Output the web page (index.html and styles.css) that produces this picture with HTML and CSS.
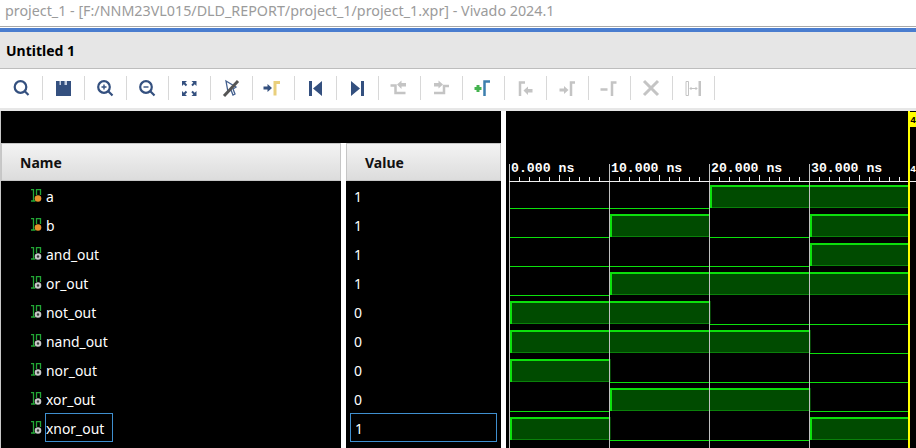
FILE: index.html
```html
<!DOCTYPE html>
<html>
<head>
<meta charset="utf-8">
<title>project_1 - Vivado 2024.1</title>
<link rel="stylesheet" href="styles.css">
</head>
<body>
<div class="titlebar">project_1 - [F:/NNM23VL015/DLD_REPORT/project_1/project_1.xpr] - Vivado 2024.1</div>
<div class="accent"></div>
<div class="tabbar">Untitled 1</div>

<div class="toolbar">
	<!-- search -->
	<div class="tool"><svg viewBox="0 0 20 20"><circle class="line" cx="9.5" cy="9" r="5.800"/><path class="line" d="M13.800 13.300l3.700 3.700"/></svg></div>
	<!-- save -->
	<div class="tool"><svg viewBox="0 0 20 20"><path class="solid" d="M3 3h15v15H3z"/><path class="notch" d="M6.500 3H8v4H6.500zM11.500 3H14v4h-2.500z"/></svg></div>
	<!-- zoom in -->
	<div class="tool"><svg viewBox="0 0 20 20"><circle class="line" cx="9" cy="9" r="5.800"/><path class="line" d="M13.300 13.300l4.200 4.200"/><path class="thin" d="M6.500 9h5M9 6.500v5"/></svg></div>
	<!-- zoom out -->
	<div class="tool"><svg viewBox="0 0 20 20"><circle class="line" cx="9" cy="9" r="5.800"/><path class="line" d="M13.300 13.300l4.200 4.200"/><path class="thin" d="M6.500 9h5"/></svg></div>
	<!-- fit -->
	<div class="tool"><svg viewBox="0 0 20 20"><path class="solid" d="M3 3h5l-1.800 1.800 2 2-1.400 1.400-2-2L3 8zM17.500 3v5l-1.800-1.800-2 2-1.400-1.400 2-2L12.500 3zM3 18v-5l1.800 1.800 2-2 1.400 1.400-2 2L8 18zM17.500 18h-5l1.800-1.800-2-2 1.400-1.400 2 2 1.800-1.800z"/></svg></div>
	<!-- cursor off -->
	<div class="tool"><svg viewBox="0 0 20 20"><path class="cursor" d="M5 3l10 6-3 2 2 5-2 1-2-5-3 2z"/><path class="slash" d="M17 3L3 18"/></svg></div>
	<!-- go to cursor -->
	<div class="tool"><svg viewBox="0 0 20 20"><path class="solid" d="M.5 8.500h4V6L9 10l-4.500 4v-2.500h-4z"/><path class="yellow" d="M12 17.500V4.500h5"/></svg></div>
	<!-- first -->
	<div class="tool"><svg viewBox="0 0 20 20"><path class="solid" d="M4 3h3v15H4zM17 3v15l-9-7.500z"/></svg></div>
	<!-- last -->
	<div class="tool"><svg viewBox="0 0 20 20"><path class="solid" d="M14 3h3v15h-3zM4 3v15l9-7.500z"/></svg></div>
	<!-- previous edge -->
	<div class="tool"><svg viewBox="0 0 20 20"><path class="off-line" d="M1.500 7.500h5V15h10"/><path class="off-solid" d="M8 6.500l4.500-4V5H17v3.500h-4.500V11z"/></svg></div>
	<!-- next edge -->
	<div class="tool"><svg viewBox="0 0 20 20"><path class="off-line" d="M3 15h10V8h5"/><path class="off-solid" d="M3 5h4.500V2.500L12 6.500l-4.500 4V8.500H3z"/></svg></div>
	<!-- add marker -->
	<div class="tool"><svg viewBox="0 0 20 20"><path class="green" d="M1.500 10.500h7M5 7v7"/><path class="blue" d="M11.500 18V3.500H17"/></svg></div>
	<!-- swap left -->
	<div class="tool"><svg viewBox="0 0 20 20"><path class="off-line" d="M5 18V4.500h5"/><path class="off-solid" d="M8.500 12.500l4.500-4V11h4.500v3.500H13V17z"/></svg></div>
	<!-- swap right -->
	<div class="tool"><svg viewBox="0 0 20 20"><path class="off-line" d="M14 18V4.500h4"/><path class="off-solid" d="M2.500 10.500H7V8l4.500 4L7 16v-2.500H2.500z"/></svg></div>
	<!-- remove marker -->
	<div class="tool"><svg viewBox="0 0 20 20"><path class="off-line" d="M1.500 11.500h7M13 18V4.500h4.500"/></svg></div>
	<!-- delete -->
	<div class="tool"><svg viewBox="0 0 20 20"><path class="off-cross" d="M3 3l14 14M17 3L3 17"/></svg></div>
	<!-- interval -->
	<div class="tool"><svg viewBox="0 0 20 20"><path class="off-thin" d="M3 3.500h2.500v14H3zM7 10.500h7M8.500 9l-1.500 1.500L8.500 12M12.500 9l1.500 1.500L12.500 12"/><path class="off-solid" d="M15.500 3H18v15h-2.500z"/></svg></div>
</div>
<div class="band"></div>

<div class="main">
	<div class="signals">
		<div class="topgap"></div>
		<div class="columns">
			<div class="col col-name">
				<div class="head">Name</div>
				<div class="row"><svg class="sig" viewBox="0 0 12 15"><path class="sig-line" d="M1 .5h2.500v11M1 12h4.500M6.500 6V.5h4V6"/><circle class="dot-in" cx="8" cy="9.500" r="3.300"/></svg><span class="cell">a</span></div>
				<div class="row"><svg class="sig" viewBox="0 0 12 15"><path class="sig-line" d="M1 .5h2.500v11M1 12h4.500M6.500 6V.5h4V6"/><circle class="dot-in" cx="8" cy="9.500" r="3.300"/></svg><span class="cell">b</span></div>
				<div class="row"><svg class="sig" viewBox="0 0 12 15"><path class="sig-line" d="M1 .5h2.500v11M1 12h4.500M6.500 6V.5h4V6"/><circle class="dot-out" cx="8" cy="9.500" r="2.300"/></svg><span class="cell">and_out</span></div>
				<div class="row"><svg class="sig" viewBox="0 0 12 15"><path class="sig-line" d="M1 .5h2.500v11M1 12h4.500M6.500 6V.5h4V6"/><circle class="dot-out" cx="8" cy="9.500" r="2.300"/></svg><span class="cell">or_out</span></div>
				<div class="row"><svg class="sig" viewBox="0 0 12 15"><path class="sig-line" d="M1 .5h2.500v11M1 12h4.500M6.500 6V.5h4V6"/><circle class="dot-out" cx="8" cy="9.500" r="2.300"/></svg><span class="cell">not_out</span></div>
				<div class="row"><svg class="sig" viewBox="0 0 12 15"><path class="sig-line" d="M1 .5h2.500v11M1 12h4.500M6.500 6V.5h4V6"/><circle class="dot-out" cx="8" cy="9.500" r="2.300"/></svg><span class="cell">nand_out</span></div>
				<div class="row"><svg class="sig" viewBox="0 0 12 15"><path class="sig-line" d="M1 .5h2.500v11M1 12h4.500M6.500 6V.5h4V6"/><circle class="dot-out" cx="8" cy="9.500" r="2.300"/></svg><span class="cell">nor_out</span></div>
				<div class="row"><svg class="sig" viewBox="0 0 12 15"><path class="sig-line" d="M1 .5h2.500v11M1 12h4.500M6.500 6V.5h4V6"/><circle class="dot-out" cx="8" cy="9.500" r="2.300"/></svg><span class="cell">xor_out</span></div>
				<div class="row"><svg class="sig" viewBox="0 0 12 15"><path class="sig-line" d="M1 .5h2.500v11M1 12h4.500M6.500 6V.5h4V6"/><circle class="dot-out" cx="8" cy="9.500" r="2.300"/></svg><span class="cell selected">xnor_out</span></div>
			</div>
			<div class="col col-value">
				<div class="head">Value</div>
				<div class="row"><span class="cell">1</span></div>
				<div class="row"><span class="cell">1</span></div>
				<div class="row"><span class="cell">1</span></div>
				<div class="row"><span class="cell">1</span></div>
				<div class="row"><span class="cell">0</span></div>
				<div class="row"><span class="cell">0</span></div>
				<div class="row"><span class="cell">0</span></div>
				<div class="row"><span class="cell">0</span></div>
				<div class="row"><span class="cell selected">1</span></div>
			</div>
		</div>
	</div>

	<svg class="wave" viewBox="506 111 410 337">
		<!-- one group per signal, same coordinates, shifted down 29px each -->
		<g>
			<path class="low" d="M510 208.500H710"/>
			<path class="fill" d="M710 185H909V208H710Z"/><path class="under" d="M710 207.500H909"/><path class="edge" d="M711 208V186H909"/>
		</g>
		<g transform="translate(0 29)">
			<path class="low" d="M510 208.500H610M710 208.500H810"/>
			<path class="fill" d="M610 185H710V208H610ZM810 185H909V208H810Z"/><path class="under" d="M610 207.500H710M810 207.500H909"/><path class="edge" d="M611 208V186H710M811 208V186H909"/>
		</g>
		<g transform="translate(0 58)">
			<path class="low" d="M510 208.500H810"/>
			<path class="fill" d="M810 185H909V208H810Z"/><path class="under" d="M810 207.500H909"/><path class="edge" d="M811 208V186H909"/>
		</g>
		<g transform="translate(0 87)">
			<path class="low" d="M510 208.500H610"/>
			<path class="fill" d="M610 185H909V208H610Z"/><path class="under" d="M610 207.500H909"/><path class="edge" d="M611 208V186H909"/>
		</g>
		<g transform="translate(0 116)">
			<path class="low" d="M710 208.500H909"/>
			<path class="fill" d="M510 185H710V208H510Z"/><path class="under" d="M510 207.500H710V185"/><path class="edge" d="M511 208V186H710"/>
		</g>
		<g transform="translate(0 145)">
			<path class="low" d="M810 208.500H909"/>
			<path class="fill" d="M510 185H810V208H510Z"/><path class="under" d="M510 207.500H810V185"/><path class="edge" d="M511 208V186H810"/>
		</g>
		<g transform="translate(0 174)">
			<path class="low" d="M610 208.500H909"/>
			<path class="fill" d="M510 185H610V208H510Z"/><path class="under" d="M510 207.500H610V185"/><path class="edge" d="M511 208V186H610"/>
		</g>
		<g transform="translate(0 203)">
			<path class="low" d="M510 208.500H610M810 208.500H909"/>
			<path class="fill" d="M610 185H810V208H610Z"/><path class="under" d="M610 207.500H810V185"/><path class="edge" d="M611 208V186H810"/>
		</g>
		<g transform="translate(0 232)">
			<path class="low" d="M610 208.500H810"/>
			<path class="fill" d="M510 185H610V208H510ZM810 185H909V208H810Z"/><path class="under" d="M510 207.500H610V185M810 207.500H909"/><path class="edge" d="M511 208V186H610M811 208V186H909"/>
		</g>

		<path class="grid" d="M509.500 164V448M609.500 164V448M709.500 164V448M809.500 164V448"/>
		<path class="ruler" d="M509 181.500H916"/>
		<path class="ruler" d="M519.500 177V181M529.500 177V181M539.500 177V181M549.500 177V181M559.500 175V181M569.500 177V181M579.500 177V181M589.500 177V181M599.500 177V181
			M619.500 177V181M629.500 177V181M639.500 177V181M649.500 177V181M659.500 175V181M669.500 177V181M679.500 177V181M689.500 177V181M699.500 177V181
			M719.500 177V181M729.500 177V181M739.500 177V181M749.500 177V181M759.500 175V181M769.500 177V181M779.500 177V181M789.500 177V181M799.500 177V181
			M819.500 177V181M829.500 177V181M839.500 177V181M849.500 177V181M859.500 175V181M869.500 177V181M879.500 177V181M889.500 177V181M899.500 177V181"/>
		<text class="time" x="511" y="172">0.000 ns</text>
		<text class="time" x="611" y="172">10.000 ns</text>
		<text class="time" x="711" y="172">20.000 ns</text>
		<text class="time" x="811" y="172">30.000 ns</text>
		<text class="time-cut" x="910.2" y="172">4</text>

		<path class="now" d="M909 111V448"/>
		<rect class="now-box" x="909" y="112" width="7" height="15"/>
		<text class="time-cut now-text" x="910.2" y="123">4</text>
	</svg>
</div>
</body>
</html>
```

FILE: styles.css
```css
html, body {
	margin: 0;
	height: 448px;
	overflow: hidden;
	background: white;
	font-family: "Noto Sans", sans-serif;
}

.titlebar {
	height: 26px;
	padding-left: 5px;
	border-bottom: 1px solid #a9a9a9;
	font-size: 14.3px;
	line-height: 21px;
	color: #9b9b9b;
	white-space: nowrap;
}
.accent {
	height: 4px;
	margin-top: 1px;
	background: #4a7dcf;
}
.tabbar {
	height: 36px;
	padding-left: 6px;
	border-bottom: 1px solid #bdbdbd;
	background: #e6e6e6;
	font-size: 14px;
	font-weight: bold;
	line-height: 37px;
	color: black;
}

.toolbar {
	display: flex;
	align-items: flex-start;
	height: 32px;
	padding-top: 7px;
}
.tool {
	display: flex;
	align-items: center;
	width: 31px;
	height: 24px;
	padding-left: 10px;
	border-right: 1px solid #d8d8d8;
}
.tool:first-child {
	width: 31px;
	padding-left: 11px;
}
.tool svg {
	width: 20px;
	height: 20px;
}
.band {
	height: 3px;
	background: #e7e7e7;
}

/* toolbar icon strokes */
.line, .thin, .slash, .yellow, .off-line, .off-thin, .off-cross, .green, .blue, .cursor {
	fill: none;
}
.line { stroke: #34507f; stroke-width: 2.2; }
.thin { stroke: #34507f; stroke-width: 1.4; }
.solid { fill: #34507f; }
.notch { fill: #c6d0e2; }
.cursor { stroke: #44608f; stroke-width: 1.3; }
.slash { stroke: #555555; stroke-width: 3; }
.yellow { stroke: #e9cf7c; stroke-width: 3; }
.off-line { stroke: #c4c4c4; stroke-width: 2.500; }
.off-solid { fill: #c4c4c4; }
.off-thin { stroke: #c4c4c4; stroke-width: 1; }
.off-cross { stroke: #c4c4c4; stroke-width: 3; }
.green { stroke: #45b34f; stroke-width: 3; }
.blue { stroke: #3d7fae; stroke-width: 2.500; }

.main {
	display: flex;
	height: 337px;
}
.signals {
	display: flex;
	flex-direction: column;
	width: 500px;
	border-left: 1px solid #c8c8c8;
}
.topgap {
	height: 32px;
	background: black;
}
.columns {
	flex: 1;
	display: flex;
	gap: 5px;
}
.col {
	background: black;
}
.col-name {
	width: 340px;
}
.col-value {
	width: 155px;
}
.head {
	box-sizing: border-box;
	height: 38px;
	padding-left: 18px;
	margin-bottom: 2px;
	border: 1px solid #c6c6c6;
	background: linear-gradient(#f3f3f3, #dcdcdc);
	font-size: 14px;
	font-weight: bold;
	line-height: 37px;
	color: #111111;
}
.row {
	display: flex;
	align-items: center;
	height: 29px;
	font-size: 14px;
	color: white;
}
.col-name .row {
	padding-left: 29px;
	font-size: 13.9px;
}
.col-value .row {
	padding-left: 4px;
}
.sig {
	flex: none;
	width: 12px;
	height: 15px;
	margin-right: 4px;
	margin-top: -2px;
}
.sig-line {
	fill: none;
	stroke: #22a635;
	stroke-width: 1.3;
}
.dot-in {
	fill: #e8922c;
}
.dot-out {
	fill: #3a3a3a;
	stroke: #c8c8c8;
	stroke-width: 2;
}
.cell {
	box-sizing: border-box;
	height: 29px;
	line-height: 27px;
}
.col-value .cell {
	padding-left: 4px;
}
.selected {
	width: 68px;
	height: 29px;
	margin-top: -4px;
	margin-left: -1px;
	line-height: 29px;
	border: 1px solid #3f8fcf;
}
.col-value .selected {
	width: 147px;
	margin-left: 0;
}

.wave {
	display: block;
	width: 410px;
	height: 337px;
	margin-left: 5px;
	background: black;
}
.low {
	fill: none;
	stroke: #0ce00c;
	stroke-width: 1;
}
.fill {
	fill: #004b00;
}
.under {
	fill: none;
	stroke: #0a800a;
	stroke-width: 1;
}
.edge {
	fill: none;
	stroke: #0ce00c;
	stroke-width: 2;
}
.grid {
	fill: none;
	stroke: #c0c0c0;
	stroke-width: 1;
}
.ruler {
	fill: none;
	stroke: #f0f0f0;
	stroke-width: 1;
}
.time {
	font-family: "Liberation Mono", monospace;
	font-size: 13.2px;
	font-weight: bold;
	fill: white;
}
/* the 40 ns label runs off the window, only its first digit shows */
.time-cut {
	font-family: "Liberation Mono", monospace;
	font-size: 9.500px;
	font-weight: bold;
	fill: white;
}
.now {
	stroke: #ffff00;
	stroke-width: 2;
}
.now-box {
	fill: #ffff00;
}
.now-text {
	fill: black;
}
```
